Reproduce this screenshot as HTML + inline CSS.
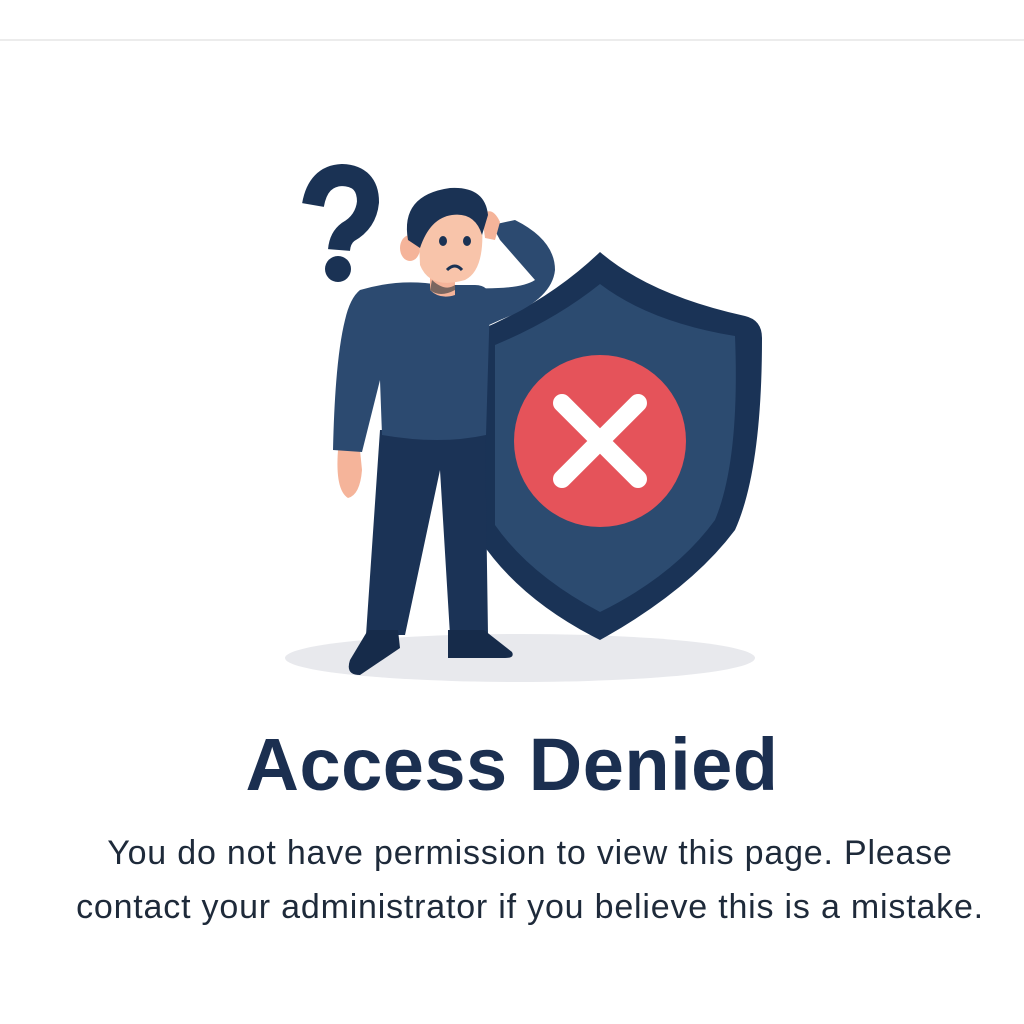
<!DOCTYPE html>
<html><head><meta charset="utf-8"><style>
html,body{margin:0;padding:0;background:#fff;width:1024px;height:1024px;overflow:hidden;font-family:"Liberation Sans",sans-serif}
.line{position:absolute;left:0;top:39px;width:1024px;height:2px;background:#ececec}
svg{position:absolute;left:0;top:0}
h1{position:absolute;top:722px;left:0;width:1024px;margin:0;text-align:center;font-size:74px;font-weight:bold;color:#1b2f50;letter-spacing:0.5px}
p{position:absolute;top:826px;left:30px;width:1000px;margin:0;text-align:center;font-size:34px;line-height:54px;color:#1e2a3a;letter-spacing:0.8px;white-space:nowrap}
</style></head><body>
<div class="line"></div>
<svg width="1024" height="1024" viewBox="0 0 1024 1024">
<ellipse cx="520" cy="658" rx="235" ry="24" fill="#e8e9ed"/>
<path d="M600 252 Q650 295 745 316 Q762 320 762 338 Q762 470 735 530 Q690 590 600 640 Q520 600 480 540 L480 330 Q550 300 600 252Z" fill="#1a3356"/>
<path d="M600 284 Q650 322 735 336 Q740 460 715 520 Q675 575 600 612 Q530 575 495 525 L495 345 Q555 320 600 284Z" fill="#2c4b70"/>
<circle cx="600" cy="441" r="86" fill="#e5535a"/>
<path d="M562 403 L638 479 M638 403 L562 479" stroke="#fff" stroke-width="18" stroke-linecap="round"/>
<path d="M313 205 Q318 176 342 175 Q368 176 368 202 Q366 222 348 232 Q340 238 339 250" stroke="#1a3254" stroke-width="22" fill="none"/>
<circle cx="338" cy="269" r="13" fill="#1a3254"/>
<path d="M380 430 L485 430 L488 635 L450 635 L440 470 L405 635 L366 635 Z" fill="#1b3356"/>
<path d="M368 630 L398 630 L400 648 L360 675 Q345 675 350 660Z" fill="#162b4a"/>
<path d="M448 630 L484 630 L512 652 Q515 658 505 658 L448 658Z" fill="#162b4a"/>
<path d="M338 450 Q335 490 348 498 Q360 495 362 470 L360 450Z" fill="#f5b49a"/>
<path d="M360 290 Q400 278 440 285 L475 285 Q490 285 490 300 L486 435 Q440 445 382 435 L380 380 L362 452 L333 450 Q335 360 345 320 Q350 298 360 290Z" fill="#2c4a70"/>
<path d="M470 288 Q520 290 535 280 L500 240 L492 225 L515 220 Q555 240 555 270 Q552 300 500 320 L478 330Z" fill="#2c4a70"/>
<path d="M482 215 Q492 205 500 222 L495 240 L485 238Z" fill="#f5b49a"/>
<path d="M430 265 L455 265 L455 295 Q440 300 430 290Z" fill="#f5b49a"/>
<path d="M432 280 Q445 292 455 285 L455 290 Q440 298 430 290Z" fill="#7a6660"/>
<ellipse cx="410" cy="248" rx="10" ry="13" fill="#f5b49a"/>
<path d="M418 215 Q420 200 450 200 Q478 202 482 225 Q485 270 465 280 Q430 290 420 265 Z" fill="#f8c4aa"/>
<path d="M408 240 Q400 195 450 188 Q485 186 488 215 L482 235 Q475 212 452 215 Q430 218 420 248 Z" fill="#1a3254"/>
<ellipse cx="443" cy="241" rx="4" ry="5" fill="#1a3254"/>
<ellipse cx="467" cy="241" rx="4" ry="5" fill="#1a3254"/>
<path d="M447 270 Q455 262 462 270" stroke="#1a3254" stroke-width="3" fill="none"/>
</svg>
<h1>Access Denied</h1>
<p>You do not have permission to view this page. Please<br>contact your administrator if you believe this is a mistake.</p>
</body></html>
